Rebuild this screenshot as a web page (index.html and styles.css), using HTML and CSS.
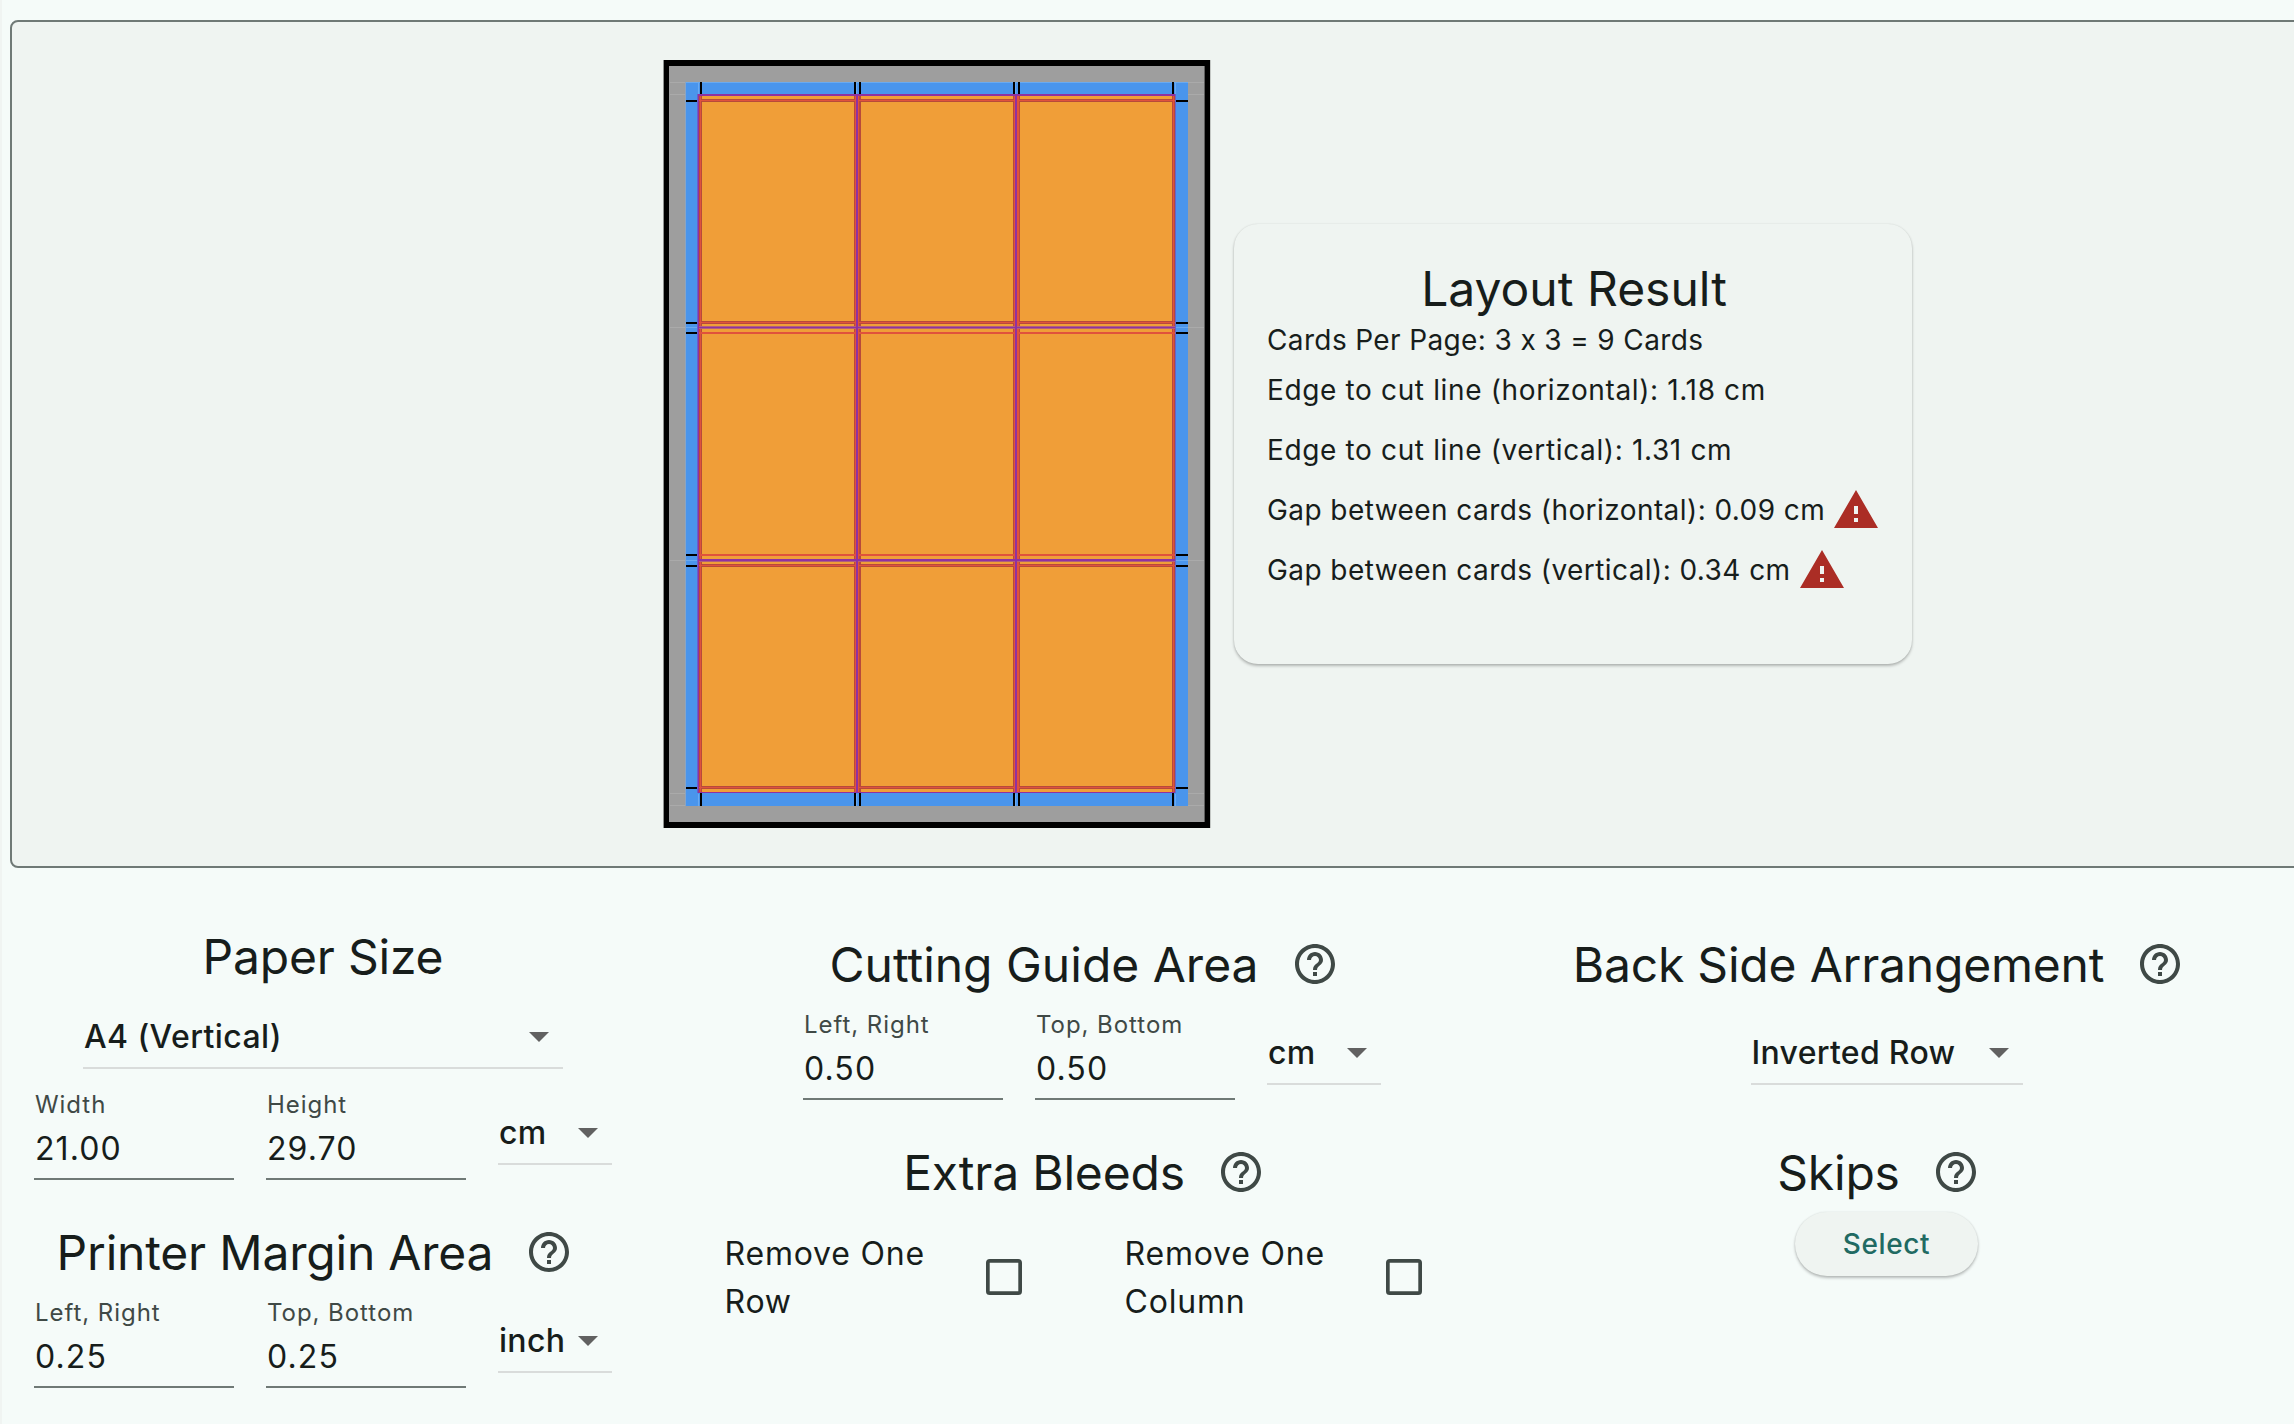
FILE: index.html
```html
<!DOCTYPE html>
<html lang="en">
<head>
<meta charset="utf-8">
<title>Layout</title>
<link rel="stylesheet" href="styles.css">
</head>
<body>
<svg width="0" height="0" class="defs">
  <symbol id="help" viewBox="0 0 24 24"><path d="M11 18h2v-2h-2v2zm1-16C6.48 2 2 6.48 2 12s4.480 10 10 10 10-4.480 10-10S17.520 2 12 2zm0 18c-4.410 0-8-3.590-8-8s3.590-8 8-8 8 3.590 8 8-3.590 8-8 8zm0-14c-2.210 0-4 1.790-4 4h2c0-1.100.9-2 2-2s2 .9 2 2c0 2-3 1.750-3 5h2c0-2.250 3-2.500 3-5 0-2.210-1.790-4-4-4z"/></symbol>
  <symbol id="warn" viewBox="0 0 24 24"><path d="M1 21h22L12 2 1 21zm12-3h-2v-2h2v2zm0-4h-2v-4h2v4z"/></symbol>
  <symbol id="caret" viewBox="0 0 24 24"><path d="M7 10l5 5 5-5z"/></symbol>
  <symbol id="box" viewBox="0 0 36 36"><rect x="1.850" y="1.850" width="32.300" height="32.300" rx="2" fill="none" stroke="currentColor" stroke-width="3.700"/></symbol>
</svg>
<main class="page">
  <section class="preview">
    <svg class="sheet" width="548" height="768" viewBox="663 60 548 768" shape-rendering="crispEdges">
      <rect x="663" y="60" width="1" height="768" fill="#8f9290"/>
      <rect x="1210" y="60" width="1" height="768" fill="#c4c8c5"/>
      <rect x="664" y="60" width="546" height="768" fill="#000"/>
      <rect x="669" y="66" width="536" height="756" fill="#9e9e9e"/>
      <rect x="1204" y="66" width="1" height="756" fill="#5f5f5f"/>
      <path d="M670 82.500H1204M670 94.500H1204M670 327.500H1204M670 560.500H1204M670 793.500H1204M670 805.500H1204" stroke="#aaa"/>
      <rect x="685" y="82" width="1" height="724" fill="#8ba5c4"/>
      <rect x="686" y="82" width="502" height="724" fill="#4a95ec"/>
      <path d="M686 82.500H1188M686 327.500H698M1176 327.500H1188M686 560.500H698M1176 560.500H1188M698.500 82V94M856.500 82V94M1015.500 82V94M1175.500 82V94M698.500 794V806M856.500 794V806M1015.500 794V806M1175.500 794V806" stroke="#6aaaf0"/>
      <rect x="699" y="95" width="476" height="698" fill="#f09e38"/>
      <!-- cutting marks -->
      <path d="M701 82V94M855 82V94M859.500 82V94M1014 82V94M1018.500 82V94M1173 82V94M701 793V806M855 793V806M859.500 793V806M1014 793V806M1018.500 793V806M1173 793V806M686 100.500H698M686 322.500H698M686 333H698M686 555H698M686 565.500H698M686 787.500H698M1175 100.500H1188M1175 322.500H1188M1175 333H1188M1175 555H1188M1175 565.500H1188M1175 787.500H1188" stroke="#000" stroke-width="2"/>
      <!-- card edges: soft outer pixels, then the bright core -->
      <path d="M699 99.500H1175M699 101.500H1175M699 321.500H1175M699 323.500H1175M699 564.500H1175M699 566.500H1175M699 786.500H1175M699 788.500H1175M699.500 96V793M701.500 96V793M854.500 96V793M860.500 96V793M859.500 96V793M1013.500 96V793M1019.500 96V793M1172.500 96V793M1174.500 96V793" stroke="#b84a3a"/>
      <path d="M699 100.500H1175M699 322.500H1175M699 332.500H1175M699 333.500H1175M699 554.500H1175M699 555.500H1175M699 565.500H1175M699 787.500H1175M700.500 96V793M855.500 96V793M858.500 96V793M1014.500 96V793M1017.500 96V793M1018.500 96V793M1173.500 96V793" stroke="#e0523c"/>
      <!-- bleed edges -->
      <path d="M699 326.500H1175M699 328.500H1175M699 561.500H1175" stroke="#b0607c"/>
      <path d="M698 94.500H1176M698 95.500H1176M698 327.500H1176M698 559.500H1176M698 560.500H1176M698 792.500H1176" stroke="#9031a0"/>
      <path d="M698.500 94V793M856.500 95V793M857.500 95V793M1015.500 95V793M1016.500 95V793" stroke="#9031a0"/>
      <path d="M697.500 94V793M1175.500 94V793" stroke="#6a62c6"/>
    </svg>
    <article class="result">
      <h2>Layout Result</h2>
      <p class="count">Cards Per Page: 3 x 3 = 9 Cards</p>
      <p class="edge">Edge to cut line (horizontal): 1.18 cm</p>
      <p class="edge">Edge to cut line (vertical): 1.31 cm</p>
      <p>Gap between cards (horizontal): 0.09 cm <svg class="warn"><use href="#warn"/></svg></p>
      <p>Gap between cards (vertical): 0.34 cm <svg class="warn"><use href="#warn"/></svg></p>
    </article>
  </section>
  <div class="settings">
    <section class="col paper">
      <h2>Paper Size</h2>
      <div class="select wide"><span>A4 (Vertical)</span><svg class="caret"><use href="#caret"/></svg></div>
      <div class="fields size">
        <label class="field"><small>Width</small><span>21.00</span></label>
        <label class="field"><small>Height</small><span>29.70</span></label>
        <div class="select unit"><span>cm</span><svg class="caret"><use href="#caret"/></svg></div>
      </div>
      <h2 class="next">Printer Margin Area<svg class="help"><use href="#help"/></svg></h2>
      <div class="fields">
        <label class="field"><small>Left, Right</small><span>0.25</span></label>
        <label class="field"><small>Top, Bottom</small><span>0.25</span></label>
        <div class="select unit"><span>inch</span><svg class="caret"><use href="#caret"/></svg></div>
      </div>
    </section>
    <section class="col cutting">
      <h2 class="wider">Cutting Guide Area<svg class="help"><use href="#help"/></svg></h2>
      <div class="fields">
        <label class="field"><small>Left, Right</small><span>0.50</span></label>
        <label class="field"><small>Top, Bottom</small><span>0.50</span></label>
        <div class="select unit"><span>cm</span><svg class="caret"><use href="#caret"/></svg></div>
      </div>
      <h2 class="next">Extra Bleeds<svg class="help"><use href="#help"/></svg></h2>
      <div class="checks">
        <label class="check"><span>Remove One Row</span><svg class="box"><use href="#box"/></svg></label>
        <label class="check"><span>Remove One Column</span><svg class="box"><use href="#box"/></svg></label>
      </div>
    </section>
    <section class="col back">
      <h2>Back Side Arrangement<svg class="help"><use href="#help"/></svg></h2>
      <div class="select order"><span>Inverted Row</span><svg class="caret"><use href="#caret"/></svg></div>
      <h2 class="skips">Skips<svg class="help"><use href="#help"/></svg></h2>
      <button class="button" type="button">Select</button>
    </section>
  </div>
</main>
</body>
</html>
```
FILE: styles.css
```css
* { box-sizing: border-box; }
body { margin: 0; background: #f5fbf9; color: #171d1b; font-family: Inter, sans-serif; overflow: hidden; }
.defs { display: block; position: absolute; }
.page { width: 2294px; height: 1424px; border-left: 2px solid #f0f4f2; padding: 20px 0 0 8px; overflow: hidden; }
.preview { width: 2560px; height: 848px; border: 2px solid #6f7976; border-radius: 8px; background: #eff4f1; display: flex; align-items: flex-start; padding: 38px 0 0 651px; }
.sheet { display: block; flex: none; }
.result { width: 678px; height: 440px; margin: 164px 0 0 23px; padding: 32px 31px 32px 33px; border-radius: 24px; background: #eff4f1; box-shadow: 0 2px 3px rgba(0,0,0,.25), 0 0 2px rgba(0,0,0,.1); }
h2 { margin: 0; padding-top: 2px; font-size: 48px; font-weight: 400; line-height: 62px; white-space: nowrap; display: flex; align-items: center; justify-content: center; }
.result p { margin: 0; height: 60px; display: flex; align-items: center; font-size: 28px; letter-spacing: .43px; white-space: nowrap; }
.result p.count { height: 40px; letter-spacing: .37px; }
.result p.edge { letter-spacing: .64px; }
.warn { width: 48px; height: 48px; flex: none; margin-left: 7px; fill: #ab2d25; }
.settings { display: flex; align-items: flex-start; padding-top: 48px; }
.col { display: flex; flex-direction: column; align-items: center; flex: none; }
.paper { width: 626px; }
.cutting { width: 912px; padding-top: 8px; }
.back { width: 677px; padding-top: 8px; }
.help { width: 48px; height: 48px; fill: #3f4946; margin: -2px 16px 0 32px; }
.col h2 { height: 80px; letter-spacing: -.2px; }
.col h2.wider { letter-spacing: 0; }
.col h2.next { margin-top: 32px; }
.col h2.skips { margin-top: 47px; }
.select { height: 66px; padding-top: 2px; border-bottom: 2px solid #d9dcdb; display: flex; justify-content: space-between; align-items: center; font-size: 32px; font-weight: 540; letter-spacing: .3px; }
.select span { padding-left: 1px; }
.caret { width: 48px; height: 48px; flex: none; fill: #616161; }
.wide { width: 480px; margin-top: 7px; letter-spacing: .4px; }
.unit { width: 114px; }
.unit span { width: 66px; }
.order { width: 272px; margin-top: 15px; }
.fields { display: flex; align-items: center; gap: 32px; height: 96px; }
.fields.size { margin-top: 15px; }
.field { width: 200px; height: 96px; padding: 5px 0 0 1px; border-bottom: 2px solid #6f7976; display: flex; flex-direction: column; gap: 4px; }
.field small { font-size: 24px; line-height: 32px; letter-spacing: .95px; color: #3f4946; }
.field span { font-size: 32px; line-height: 48px; letter-spacing: 1.1px; }
.checks { display: flex; gap: 67px; margin: 16px 2px 0 0; }
.check { display: flex; width: 333px; padding-right: 36px; justify-content: space-between; align-items: center; font-size: 32px; line-height: 48px; letter-spacing: .8px; }
.check span { width: 215px; padding-top: 2px; }
.box { width: 36px; height: 36px; color: #3f4946; }
.button { width: 183px; height: 64px; padding: 0; border: 0; border-radius: 32px; background: #eff4f1; color: #216a62; font: 500 28px Inter, sans-serif; letter-spacing: .6px; box-shadow: 0 2px 3px rgba(0,0,0,.25), 0 0 2px rgba(0,0,0,.1); }
```
